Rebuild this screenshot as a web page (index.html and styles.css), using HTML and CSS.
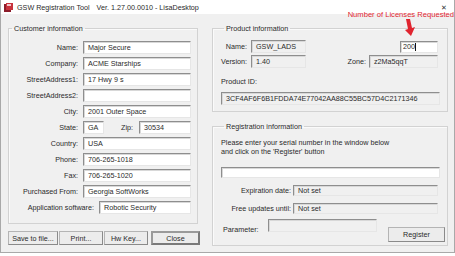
FILE: index.html
```html
<!DOCTYPE html>
<html lang="en">
<head>
  <meta charset="UTF-8" />
  <title>GSW Registration Tool</title>
  <link rel="stylesheet" href="styles.css">
</head>
<body>
  <div class="ventana">
    <!-- Barra de título -->
    <div class="titulo">
      <svg class="icono" width="9" height="9" viewBox="0 0 9 9">
        <rect x="0" y="1" width="7" height="8" fill="#8c1c2a"/>
        <rect x="2" y="0" width="7" height="7" fill="#c8323c"/>
        <rect x="3" y="1" width="4" height="2" fill="#f3c6c8"/>
      </svg>
      <span>GSW Registration Tool</span>
      <span class="version">Ver. 1.27.00.0010 - LisaDesktop</span>
      <span class="cerrar">&#x2715;</span>
    </div>

    <!-- Anotación roja -->
    <div class="nota">Number of Licenses Requested</div>
    <svg class="flecha" width="14" height="18" viewBox="0 0 14 18">
      <polygon points="3,0 7,0 9,9 12,8 8,17 2,11 5,10" fill="#e0242f"/>
    </svg>

    <div class="contenido">
      <!-- Columna izquierda -->
      <div class="col-izq">
        <fieldset class="grupo cliente">
          <legend>Customer information</legend>
          <div class="fila"><span class="etq">Name:</span><div class="caja">Major Secure</div></div>
          <div class="fila"><span class="etq">Company:</span><div class="caja">ACME Starships</div></div>
          <div class="fila"><span class="etq">StreetAddress1:</span><div class="caja">17 Hwy 9 s</div></div>
          <div class="fila"><span class="etq">StreetAddress2:</span><div class="caja"></div></div>
          <div class="fila"><span class="etq">City:</span><div class="caja">2001 Outer Space</div></div>
          <div class="fila">
            <span class="etq">State:</span>
            <div class="estado">
              <div class="caja caja-ga">GA</div>
              <span class="etq-zip">Zip:</span>
              <div class="caja caja-zip">30534</div>
            </div>
          </div>
          <div class="fila"><span class="etq">Country:</span><div class="caja">USA</div></div>
          <div class="fila"><span class="etq">Phone:</span><div class="caja">706-265-1018</div></div>
          <div class="fila"><span class="etq">Fax:</span><div class="caja">706-265-1020</div></div>
          <div class="fila"><span class="etq">Purchased From:</span><div class="caja">Georgia SoftWorks</div></div>
          <div class="fila fila-app"><span class="etq">Application software:</span><div class="caja">Robotic Security</div></div>
        </fieldset>

        <div class="botones">
          <button class="btn b-save">Save to file...</button>
          <button class="btn b-print">Print...</button>
          <button class="btn b-hw">Hw Key...</button>
          <button class="btn b-close">Close</button>
        </div>
      </div>

      <!-- Columna derecha -->
      <div class="col-der">
        <fieldset class="grupo producto">
          <legend>Product information</legend>
          <div class="fila-p">
            <span class="etq-p">Name:</span>
            <div class="caja gris caja-p">GSW_LADS</div>
            <div class="caja caja-lic">200<span class="cursor"></span></div>
          </div>
          <div class="fila-p">
            <span class="etq-p">Version:</span>
            <div class="caja gris caja-p">1.40</div>
            <span class="etq-zona">Zone:</span>
            <div class="caja gris caja-zona">z2Ma5qqT</div>
          </div>
          <div class="etq-id">Product ID:</div>
          <div class="caja gris caja-id">3CF4AF6F6B1FDDA74E77042AA88C55BC57D4C2171346</div>
        </fieldset>

        <fieldset class="grupo registro">
          <legend>Registration information</legend>
          <p class="aviso">Please enter your serial number in the window below<br>and click on the 'Register' button</p>
          <div class="caja caja-serie"></div>
          <div class="fila-r"><span class="etq-r">Expiration date:</span><div class="caja gris caja-r">Not set</div></div>
          <div class="fila-r"><span class="etq-r">Free updates until:</span><div class="caja gris caja-r">Not set</div></div>
          <div class="fila-param">
            <span class="etq-param">Parameter:</span>
            <div class="caja gris caja-param"></div>
            <button class="btn b-reg">Register</button>
          </div>
        </fieldset>
      </div>
    </div>
  </div>
</body>
</html>
```

FILE: styles.css
```css
/* ---------- Base ---------- */
:root{
  --fondo:#f0f0f0;
  --texto:#2a2a2a;
  --marco:#d2d2d2;
  --rojo:#e0242f;
}
*{box-sizing:border-box}
body{
  margin:0;
  font-family:"Liberation Sans",Arial,sans-serif;
  font-size:7.2px;
  line-height:9px;
  color:var(--texto);
  background:#fff;
}

/* ---------- Ventana ---------- */
.ventana{
  position:relative;
  width:455px;
  height:253px;
  background:var(--fondo);
  border:1px solid #a9a9a9;
  border-top:none;
}
.titulo{
  height:14px;
  background:#fff;
  display:flex;
  align-items:center;
  padding-left:3px;
}
.icono{margin-right:4px}
.version{margin-left:7px}
.cerrar{
  margin-left:auto;
  margin-right:7px;
  font-size:7px;
  color:#333;
}

/* ---------- Anotación ---------- */
.nota{
  position:absolute;
  top:10px;
  right:0;
  color:var(--rojo);
  font-size:7.6px;
}
.flecha{
  position:absolute;
  left:402px;
  top:19px;
}

/* ---------- Disposición ---------- */
.contenido{
  display:flex;
  padding:0 6px 0 7px;
  gap:12px;
}
.col-izq{width:192px}
.col-der{width:236px}

/* ---------- Grupos ---------- */
.grupo{
  margin:10px 0 0;
  border:1px solid var(--marco);
  box-shadow:inset 1px 1px 0 #fafafa;
  min-width:0;
}
.grupo legend{
  padding:0 2px;
  margin-left:3px;
  line-height:9px;
}

/* ---------- Cliente ---------- */
.cliente{
  width:190px;
  padding:8px 6px 9px 0;
  display:flex;
  flex-direction:column;
  gap:3px;
}
.fila{
  display:grid;
  grid-template-columns:69px 108px;
  column-gap:5px;
  align-items:center;
}
.etq{text-align:right;white-space:nowrap}
.fila-app{grid-template-columns:85px 92px;column-gap:5px}
.estado{display:flex;align-items:center}
.caja-ga{width:21px}
.etq-zip{flex:1;text-align:right;margin-right:6px}
.caja-zip{width:52px}

/* ---------- Cajas de texto ---------- */
.caja{
  height:13px;
  background:#fff;
  border:1px solid #e6e6e6;
  border-top-color:#8e8e8e;
  border-left-color:#8e8e8e;
  box-shadow:inset 1px 1px 0 #d8d8d8;
  padding:1px 0 0 4px;
  white-space:nowrap;
  overflow:hidden;
}
.gris{background:var(--fondo)}

/* ---------- Botones ---------- */
.botones{
  display:flex;
  gap:1px;
  margin-top:7px;
}
.btn{
  height:14px;
  padding:0;
  font:inherit;
  color:var(--texto);
  background:#ececec;
  border:1px solid #b4b4b4;
  border-right-color:#8a8a8a;
  border-bottom-color:#8a8a8a;
}
.b-save{width:50px}
.b-print{width:44px}
.b-hw{width:44px}
.b-close{
  width:49px;
  margin-left:2px;
  border:2px solid #7a7a7a;
  border-top-color:#9a9a9a;
  border-left-color:#9a9a9a;
}

/* ---------- Producto ---------- */
.producto{
  padding:7px 8px 6px 8px;
}
.fila-p{
  display:flex;
  align-items:center;
  margin-bottom:2px;
}
.etq-p{width:26px;text-align:right;white-space:nowrap;margin-right:4px}
.caja-p{width:55px}
.caja-lic{
  width:38px;
  height:12px;
  margin-left:auto;
  margin-right:1px;
  display:flex;
  align-items:center;
  padding:0 0 0 2px;
}
.cursor{
  width:1px;
  height:8px;
  background:#111;
}
.etq-zona{margin-left:auto;margin-right:3px}
.caja-zona{width:69px;margin-right:1px}
.etq-id{margin-top:9px}
.caja-id{margin-top:6px;width:219px}

/* ---------- Registro ---------- */
.registro{
  padding:6px 8px 3px 8px;
}
.aviso{margin:1px 0 0}
.caja-serie{
  margin-top:11px;
  height:11px;
  width:219px;
}
.fila-r{
  display:flex;
  align-items:center;
  margin-top:7px;
}
.etq-r{width:70px;text-align:right;white-space:nowrap;margin-right:2px}
.caja-r{width:145px;height:11px;padding-top:0}
.fila-param{
  display:flex;
  align-items:flex-start;
  margin-top:5px;
}
.etq-param{margin-top:6px;width:45px;margin-left:2px}
.caja-param{width:109px;height:13px}
.b-reg{
  width:57px;
  height:15px;
  margin:8px -6px 0 auto;
}
```
